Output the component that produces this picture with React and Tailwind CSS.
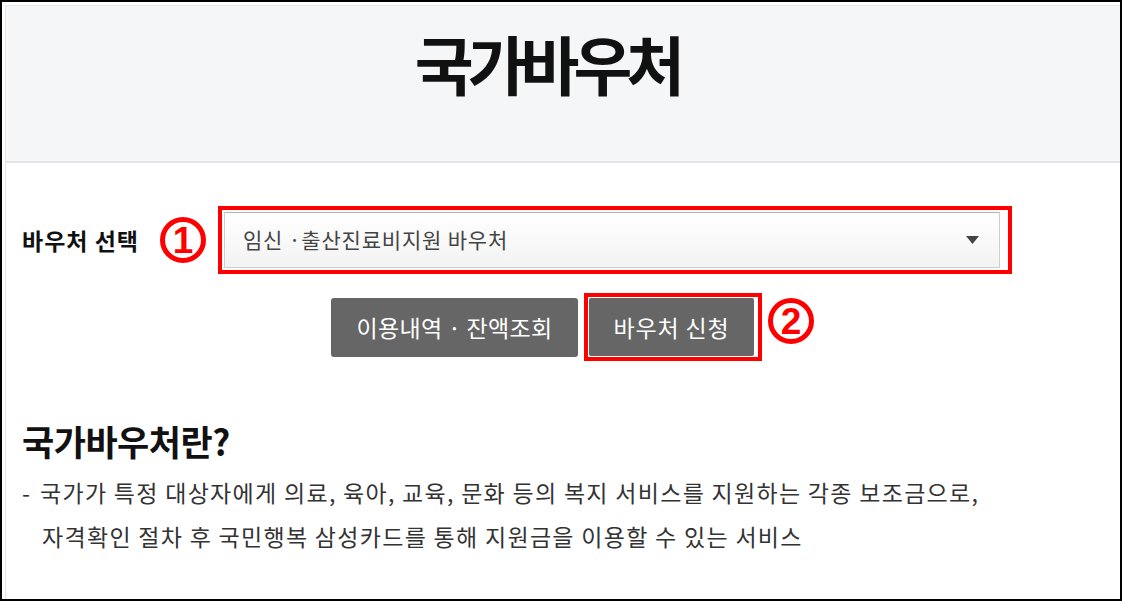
import React from "react";

const FONT = { fontFamily: '"Noto Sans CJK KR", "Noto Sans", sans-serif' };

function Circled({ n }) {
  return (
    <div className="w-[46px] h-[46px] rounded-full border-[5px] border-[#ff0000] flex items-center justify-center shrink-0 box-border">
      <span
        className="text-[37px] font-bold text-[#ff0000] leading-none mt-[1px]"
        style={{ fontFamily: '"Liberation Sans", Arial, sans-serif' }}
      >
        {n}
      </span>
    </div>
  );
}

export default function App() {
  return (
    <div
      className="w-[1122px] h-[601px] border-2 border-black bg-white overflow-hidden box-border"
      style={FONT}
    >
      <div className="ml-[3px] mt-[3px] h-full border-l border-t border-[#e4e6ea]">
        {/* header */}
        <header className="h-[157px] bg-[#f5f6f8] border-b-2 border-[#e3e4e7] box-border flex justify-center pr-[32px] pt-[24px]">
          <h1 className="text-[64px] leading-[64px] font-bold tracking-[-6px] text-[#111]">
            국가바우처
          </h1>
        </header>

        <main className="pl-[16px]">
          {/* row 1 */}
          <div className="mt-[43px] flex items-center h-[68px]">
            <span className="text-[23px] font-bold text-[#111] tracking-[1px] w-[118px] shrink-0 whitespace-nowrap">
              바우처 선택
            </span>
            <div className="ml-[20px]">
              <Circled n="1" />
            </div>
            <div className="ml-[12px] w-[794px] h-[68px] border-[4px] border-[#ff0000] box-border pl-[2px] pr-[8px] py-[2px]">
              <div className="h-full border border-[#cfcfcf] border-t-[#b9b1aa] bg-gradient-to-b from-white to-[#f3f3f3] flex items-center pl-[18px] pr-[20px]">
                <span className="text-[21px] text-[#444] flex-1 tracking-[0.8px]">
                  임신 ·출산진료비지원 바우처
                </span>
                <svg width="13" height="8" viewBox="0 0 13 8">
                  <path d="M0 0 L13 0 L6.5 8 Z" fill="#444" />
                </svg>
              </div>
            </div>
          </div>

          {/* row 2 */}
          <div className="mt-[19px] flex items-start ml-[309px]">
            <button className="mt-[5px] w-[247px] h-[59px] rounded-[3px] bg-[#666666] text-white text-[23px] tracking-[0.3px] flex items-center justify-center">
              이용내역 · 잔액조회
            </button>
            <div className="ml-[6px] w-[178px] h-[68px] border-[4px] border-[#ff0000] box-border pl-[1px] pr-[4px] py-[1px]">
              <button className="w-full h-full bg-[#666666] rounded-[2px] text-white text-[23px] tracking-[0.8px] flex items-center justify-center">
                바우처 신청
              </button>
            </div>
            <div className="ml-[6px] mt-[5px]">
              <Circled n="2" />
            </div>
          </div>

          {/* about */}
          <h2 className="mt-[60px] text-[35px] leading-[40px] font-bold tracking-[-0.5px] text-[#111]">
            국가바우처란?
          </h2>
          <div className="mt-[9px] text-[23px] leading-[44px] text-[#333] tracking-[1.3px]">
            <div className="flex whitespace-nowrap">
              <span className="w-[18px] shrink-0">-</span>
              <span>
                국가가 특정 대상자에게 의료, 육아, 교육, 문화 등의 복지 서비스를 지원하는 각종 보조금으로,
              </span>
            </div>
            <div className="pl-[20px] whitespace-nowrap">
              자격확인 절차 후 국민행복 삼성카드를 통해 지원금을 이용할 수 있는 서비스
            </div>
          </div>
        </main>
      </div>
    </div>
  );
}
